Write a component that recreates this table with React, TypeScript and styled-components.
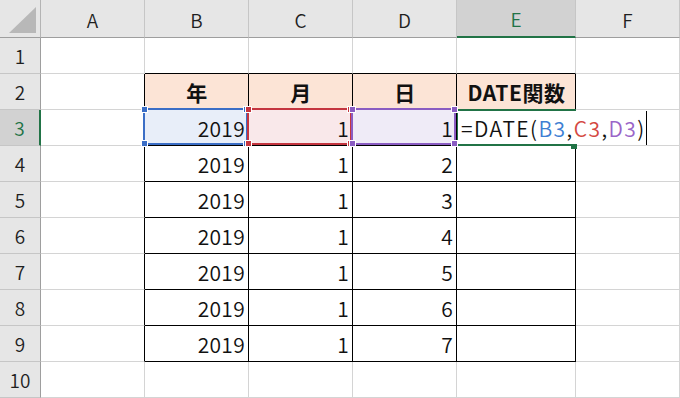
import React from 'react';
import styled, { createGlobalStyle } from 'styled-components';

const GRID = '#d4d4d4';
const INK = '#000000';
const EXCEL_GREEN = '#217346';

const GlobalStyle = createGlobalStyle`
  html, body {
    margin: 0;
    padding: 0;
    background: #ffffff;
  }
  body {
    font-family: "Noto Sans CJK JP", "Noto Sans", sans-serif;
    color: #111;
  }
`;

const columns = ['A', 'B', 'C', 'D', 'E', 'F'];
const rowCount = 10;

const tableHead = ['年', '月', '日', 'DATE関数'];
const tableBody = [1, 2, 3, 4, 5, 6, 7].map((d) => [2019, 1, d]);

interface RefRange {
  color: string;
  fill: string;
  layer: number;
}

// colour-coded ranges referenced by the formula in E3
const refs: Record<string, RefRange> = {
  '3:1': { color: '#3b6ec6', fill: '#e8eef9', layer: 3 },
  '3:2': { color: '#c4353f', fill: '#f9e8ea', layer: 4 },
  '3:3': { color: '#8a5cc2', fill: '#efebf7', layer: 5 },
};

const inTable = (r: number, c: number) => r >= 2 && r <= 9 && c >= 1 && c <= 4;

const App: React.FC = () => {
  const cells: React.ReactNode[] = [];

  for (let r = 1; r <= rowCount; r++) {
    cells.push(
      <RowHeader key={`h${r}`} $active={r === 3}>
        {r}
      </RowHeader>,
    );
    columns.forEach((_, c) => {
      const right = inTable(r, c) || inTable(r, c + 1) ? INK : GRID;
      const bottom = inTable(r, c) || inTable(r + 1, c) ? INK : GRID;
      const key = `${r}:${c}`;
      const ref = refs[key];

      let content: React.ReactNode = null;
      let fill = 'transparent';
      let bold = false;
      let align: 'center' | 'flex-end' = 'flex-end';

      if (r === 2 && c >= 1 && c <= 4) {
        content = tableHead[c - 1];
        fill = '#fce4d6';
        bold = true;
        align = 'center';
      } else if (r >= 3 && r <= 9 && c >= 1 && c <= 3) {
        content = tableBody[r - 3][c - 1];
      }
      if (ref) fill = ref.fill;

      const isActive = r === 3 && c === 4;

      cells.push(
        <Cell
          key={key}
          $right={right}
          $bottom={bottom}
          $fill={fill}
          $bold={bold}
          $align={align}
          $layer={ref ? ref.layer : isActive ? 2 : 0}
        >
          {content}
          {ref && (
            <RefBox $color={ref.color}>
              <Handle $color={ref.color} $v="top" $h="left" />
              <Handle $color={ref.color} $v="top" $h="right" />
              <Handle $color={ref.color} $v="bottom" $h="left" />
              <Handle $color={ref.color} $v="bottom" $h="right" />
            </RefBox>
          )}
          {isActive && (
            <>
              <Editor>
                =DATE(<Arg $color="#3f7fd3">B3</Arg>,<Arg $color="#d4483f">C3</Arg>,
                <Arg $color="#9a65c8">D3</Arg>)
                <Caret />
              </Editor>
              <ActiveBox>
                <FillHandle />
              </ActiveBox>
            </>
          )}
        </Cell>,
      );
    });
  }

  return (
    <>
      <GlobalStyle />
      <Sheet>
        <Corner>
          <svg width="41" height="38" viewBox="0 0 41 38">
            <polygon points="9,33 36,7 36,33" fill="#b8b8b8" />
          </svg>
        </Corner>
        {columns.map((col) => (
          <ColHeader key={col} $active={col === 'E'}>
            {col}
          </ColHeader>
        ))}
        {cells}
      </Sheet>
    </>
  );
};

const Sheet = styled.div`
  display: grid;
  grid-template-columns: 41px 104px 104px 104px 104px 119px 1fr;
  grid-template-rows: 38px repeat(${rowCount}, 36px);
  width: 680px;
  height: 398px;
  overflow: hidden;
  background: #ffffff;
`;

const Corner = styled.div`
  background: #e6e6e6;
  border-right: 1px solid #b4b4b4;
  border-bottom: 1px solid #9e9e9e;
  box-sizing: border-box;
  svg {
    display: block;
  }
`;

const ColHeader = styled.div<{ $active: boolean }>`
  display: flex;
  align-items: center;
  justify-content: center;
  box-sizing: border-box;
  background: ${(p) => (p.$active ? '#d2d2d2' : '#e6e6e6')};
  color: ${(p) => (p.$active ? EXCEL_GREEN : '#1f1f1f')};
  border-right: 1px solid #c6c6c6;
  border-bottom: ${(p) => (p.$active ? `2px solid ${EXCEL_GREEN}` : '1px solid #9e9e9e')};
  font-size: 19px;
  font-weight: 350;
  padding-top: 1px;
`;

const RowHeader = styled.div<{ $active: boolean }>`
  display: flex;
  align-items: center;
  justify-content: center;
  box-sizing: border-box;
  background: ${(p) => (p.$active ? '#d2d2d2' : '#e6e6e6')};
  color: ${(p) => (p.$active ? EXCEL_GREEN : '#1f1f1f')};
  border-right: ${(p) => (p.$active ? `2px solid ${EXCEL_GREEN}` : '1px solid #9e9e9e')};
  border-bottom: 1px solid #c6c6c6;
  font-size: 19px;
  font-weight: 350;
`;

const Cell = styled.div<{
  $right: string;
  $bottom: string;
  $fill: string;
  $bold: boolean;
  $align: 'center' | 'flex-end';
  $layer: number;
}>`
  position: relative;
  z-index: ${(p) => p.$layer};
  display: flex;
  align-items: center;
  justify-content: ${(p) => p.$align};
  box-sizing: border-box;
  padding: 1px 3px 0 4px;
  background: ${(p) => p.$fill};
  border-right: 1px solid ${(p) => p.$right};
  border-bottom: 1px solid ${(p) => p.$bottom};
  font-size: 21px;
  font-weight: ${(p) => (p.$bold ? 700 : 350)};
  letter-spacing: ${(p) => (p.$bold ? '0.6px' : '0.3px')};
  white-space: nowrap;
`;

const RefBox = styled.div<{ $color: string }>`
  position: absolute;
  left: -2px;
  top: -2px;
  width: calc(100% + 2px);
  height: calc(100% + 2px);
  box-sizing: border-box;
  border: 2px solid ${(p) => p.$color};
  pointer-events: none;
`;

const Handle = styled.span<{ $color: string; $v: 'top' | 'bottom'; $h: 'left' | 'right' }>`
  position: absolute;
  ${(p) => p.$v}: -4px;
  ${(p) => p.$h}: -4px;
  width: 5px;
  height: 5px;
  background: ${(p) => p.$color};
  border: 1px solid #ffffff;
`;

const Editor = styled.span`
  position: absolute;
  left: 0;
  top: 0;
  height: 35px;
  display: flex;
  align-items: center;
  padding: 1px 0 0 4px;
  box-sizing: border-box;
  background: #ffffff;
  font-size: 21px;
  font-weight: 350;
  letter-spacing: 1.45px;
  white-space: pre;
`;

const Arg = styled.span<{ $color: string }>`
  color: ${(p) => p.$color};
`;

const Caret = styled.span`
  display: inline-block;
  width: 1px;
  height: 34px;
  margin-left: 0;
  background: #000000;
`;

const ActiveBox = styled.div`
  position: absolute;
  left: -1px;
  top: -1px;
  width: 120px;
  height: 37px;
  box-sizing: border-box;
  border-top: 2px solid ${EXCEL_GREEN};
  border-left: 2px solid ${EXCEL_GREEN};
  pointer-events: none;
  &::after {
    content: '';
    position: absolute;
    left: -2px;
    right: 5px;
    bottom: 0;
    height: 2px;
    background: ${EXCEL_GREEN};
  }
`;

const FillHandle = styled.span`
  position: absolute;
  right: -1px;
  bottom: -3px;
  width: 6px;
  height: 5px;
  background: ${EXCEL_GREEN};
`;

export default App;
